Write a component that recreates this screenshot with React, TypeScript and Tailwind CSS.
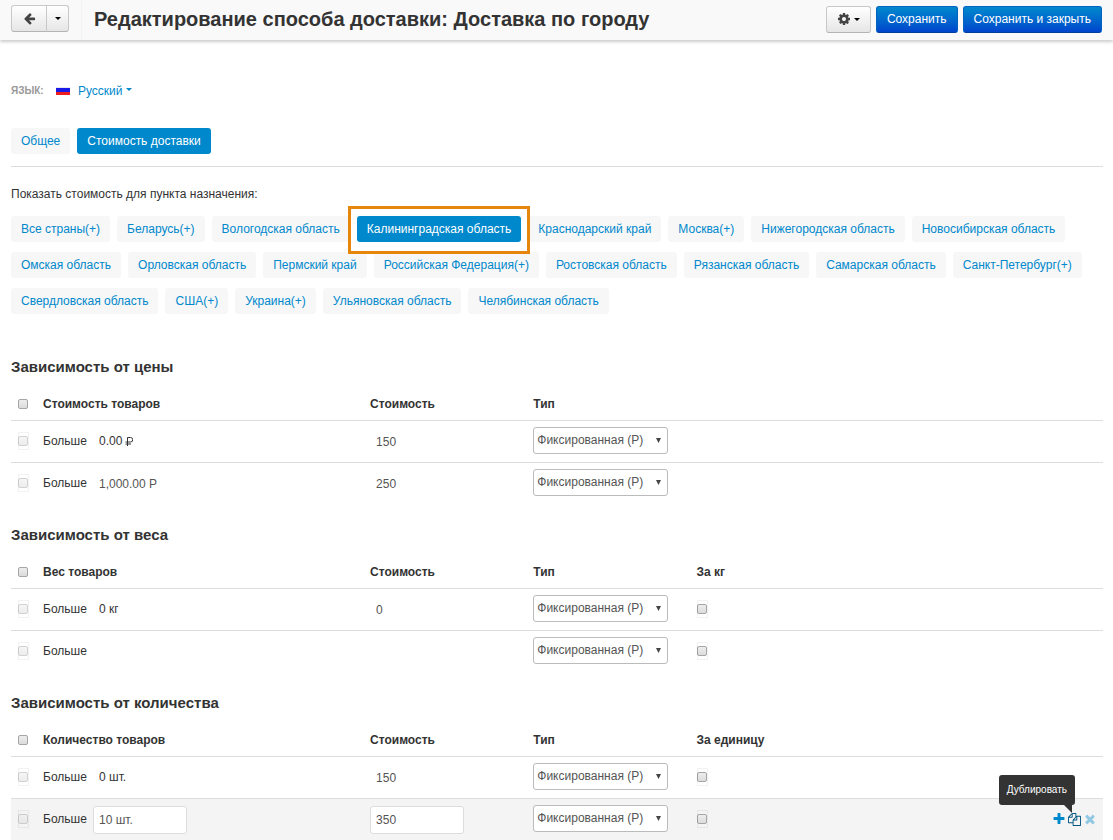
import React from "react";
import clsx from "clsx";

const ARROW_LEFT =
  "M1664 896v128q0 53-32.5 90.5t-84.5 37.5h-704l293 294q38 36 38 90t-38 90l-75 76q-37 37-90 37-52 0-91-37l-651-652q-37-37-37-90 0-52 37-91l651-650q38-38 91-38 52 0 90 38l75 74q38 38 38 91t-38 91l-293 293h704q52 0 84.5 37.5t32.5 90.5z";
const COG =
  "M1152 896q0-106-75-181t-181-75-181 75-75 181 75 181 181 75 181-75 75-181zm512-109v222q0 12-8 23t-20 13l-185 28q-19 54-39 91 35 50 107 138 10 12 10 25t-9 23q-27 37-99 108t-94 71q-12 0-26-9l-138-108q-44 23-91 38-16 136-29 186-7 28-36 28h-222q-14 0-24.5-8.5t-11.5-21.5l-28-184q-49-16-90-37l-141 107q-10 9-25 9-14 0-25-11-126-114-165-168-7-10-7-23 0-12 8-23 15-21 51-66.5t54-70.5q-27-50-41-99l-183-27q-13-2-21-12.5t-8-23.5v-222q0-12 8-23t19-13l186-28q14-46 39-92-40-57-107-138-10-12-10-24 0-10 9-23 26-36 98.5-107.5t94.5-71.5q13 0 26 10l138 107q44-23 91-38 16-136 29-186 7-28 36-28h222q14 0 24.5 8.5t11.5 21.5l28 184q49 16 90 37l142-107q9-9 24-9 13 0 25 10 129 119 165 170 7 8 7 22 0 12-8 23-15 21-51 66.5t-54 70.5q26 50 41 98l183 28q13 2 21 12.5t8 23.5z";
const PLUS =
  "M1600 736v192q0 40-28 68t-68 28h-416v416q0 40-28 68t-68 28h-192q-40 0-68-28t-28-68v-416h-416q-40 0-68-28t-28-68v-192q0-40 28-68t68-28h416v-416q0-40 28-68t68-28h192q40 0 68 28t28 68v416h416q40 0 68 28t28 68z";
const COPY =
  "M1696 384q40 0 68 28t28 68v1216q0 40-28 68t-68 28h-960q-40 0-68-28t-28-68v-288h-544q-40 0-68-28t-28-68v-672q0-40 20-88t48-76l408-408q28-28 76-48t88-20h416q40 0 68 28t28 68v328q68-40 128-40h416zm-544 213l-299 299h299v-299zm-640-384l-299 299h299v-299zm196 647l316-316v-416h-384v416q0 40-28 68t-68 28h-416v640h512v-256q0-40 20-88t48-76zm956 804v-1152h-384v416q0 40-28 68t-68 28h-416v640h896z";
const TIMES =
  "M1490 1322q0 40-28 68l-136 136q-28 28-68 28t-68-28l-294-294-294 294q-28 28-68 28t-68-28l-136-136q-28-28-28-68t28-68l294-294-294-294q-28-28-28-68t28-68l136-136q28-28 68-28t68 28l294 294 294-294q28-28 68-28t68 28l136 136q28 28 28 68t-28 68l-294 294 294 294q28 28 28 68z";

function Icon({ path, className }: { path: string; className: string }) {
  return (
    <svg viewBox="0 0 1792 1792" fill="currentColor" aria-hidden="true" className={className}>
      <path d={path} />
    </svg>
  );
}

function Caret({ className }: { className?: string }) {
  return (
    <svg viewBox="0 0 6 3" fill="currentColor" aria-hidden="true" className={clsx("h-[3px] w-[6px]", className)}>
      <path d="M0 0h6L3 3z" />
    </svg>
  );
}

function Checkbox({ label, faded }: { label: string; faded?: boolean }) {
  return (
    <input
      type="checkbox"
      aria-label={label}
      className={clsx(
        "block h-[10px] w-[10px] appearance-none rounded-[2px] border border-[#a6a6a6] bg-linear-to-b from-[#ededed] to-[#dcdcdc]",
        faded && "opacity-50",
      )}
    />
  );
}

function FramedCheckbox({ label, faded }: { label: string; faded?: boolean }) {
  return (
    <span className="flex h-[18px] w-[11px] items-center outline outline-offset-[-1px] outline-black/5">
      <Checkbox label={label} faded={faded} />
    </span>
  );
}

const greyButton =
  "flex h-[27px] items-center justify-center border border-[#c8c8c8] border-b-[#b3b3b3] bg-linear-to-b from-white to-[#e6e6e6] text-[#444]";
const blueButton =
  "h-[27px] rounded-[3px] border border-[#0063c0] border-b-[#003f9e] bg-linear-to-b from-[#0088cc] to-[#0044cc] px-[10px] text-white";

function Pill({ children, active }: { children: React.ReactNode; active?: boolean }) {
  return (
    <a
      href="#"
      className={clsx(
        "relative flex h-[26px] items-center rounded-[3px] px-[10px] whitespace-nowrap",
        active ? "bg-[#0088cc] text-white" : "bg-[#f7f7f7] text-[#0088cc]",
      )}
    >
      {children}
    </a>
  );
}

const destinations = [
  "Все страны(+)",
  "Беларусь(+)",
  "Вологодская область",
  "Калининградская область",
  "Краснодарский край",
  "Москва(+)",
  "Нижегородская область",
  "Новосибирская область",
  "Омская область",
  "Орловская область",
  "Пермский край",
  "Российская Федерация(+)",
  "Ростовская область",
  "Рязанская область",
  "Самарская область",
  "Санкт-Петербург(+)",
  "Свердловская область",
  "США(+)",
  "Украина(+)",
  "Ульяновская область",
  "Челябинская область",
];

type Row = { from: string; editableFrom?: boolean; rouble?: boolean; cost?: string; active?: boolean };
type Section = { title: string; subject: string; per?: string; rows: Row[] };

const sections: Section[] = [
  {
    title: "Зависимость от цены",
    subject: "Стоимость товаров",
    rows: [
      { from: "0.00", rouble: true, cost: "150" },
      { from: "1,000.00 Р", editableFrom: true, cost: "250" },
    ],
  },
  {
    title: "Зависимость от веса",
    subject: "Вес товаров",
    per: "За кг",
    rows: [{ from: "0 кг", cost: "0" }, { from: "" }],
  },
  {
    title: "Зависимость от количества",
    subject: "Количество товаров",
    per: "За единицу",
    rows: [
      { from: "0 шт.", cost: "150" },
      { from: "10 шт.", editableFrom: true, cost: "350", active: true },
    ],
  },
];

function Rouble() {
  return (
    <svg viewBox="0 0 8 9" fill="none" stroke="currentColor" role="img" aria-label="₽" className="h-[9px] w-[8px]">
      <path d="M2.5 9V.5H5.500a2 2 0 0 1 0 4.500H.5M.5 7H6" />
    </svg>
  );
}

function TextField({ value, label, active }: { value: string; label: string; active?: boolean }) {
  return (
    <input
      type="text"
      aria-label={label}
      defaultValue={value}
      className={clsx(
        "mt-[2px] block h-[28px] w-[94px] rounded-[3px] border px-[5px] text-[#555]",
        active ? "border-[#ddd] bg-white" : "border-transparent bg-transparent",
      )}
    />
  );
}

function RateTable({ section }: { section: Section }) {
  return (
    <section>
      <h2 className="text-[15px] leading-[20px] font-bold">{section.title}</h2>
      <table className="mt-[10px] w-full table-fixed border-collapse text-left">
        <colgroup>
          <col className="w-8" />
          <col className="w-[29.95%]" />
          <col className="w-[14.95%]" />
          <col className="w-[14.95%]" />
          <col />
        </colgroup>
        <thead>
          <tr className="h-[33px]">
            <th className="pt-[2px] pl-[7px]">
              <Checkbox label={"Выбрать все: " + section.title} />
            </th>
            <th className="pt-[2px]">{section.subject}</th>
            <th className="pt-[2px]">Стоимость</th>
            <th className="pt-[2px]">Тип</th>
            <th className="pt-[2px]">{section.per}</th>
          </tr>
        </thead>
        <tbody>
          {section.rows.map((row, i) => (
            <tr key={i} className={clsx("h-[42px] border-t border-[#ddd]", row.active && "bg-[#f4f4f4]")}>
              <td className="pl-[7px]">
                <FramedCheckbox label="Выбрать строку" faded />
              </td>
              <td>
                <div className="flex items-center">
                  <span className="w-[50px]">Больше</span>
                  {row.editableFrom ? (
                    <TextField value={row.from} label={section.subject} active={row.active} />
                  ) : (
                    <span className="flex items-center gap-[3px] pl-[6px]">
                      {row.from}
                      {row.rouble && <Rouble />}
                    </span>
                  )}
                </div>
              </td>
              <td>
                <TextField value={row.cost ?? ""} label="Стоимость" active={row.active} />
              </td>
              <td className="pb-[2px]">
                <div className="relative flex w-[135px] items-center">
                  <select
                    aria-label="Тип"
                    className="h-[27px] w-full appearance-none rounded-[3px] border border-[#bbb] bg-white pl-[3px] text-[#555]"
                  >
                    <option>Фиксированная (Р)</option>
                  </select>
                  <svg viewBox="0 0 5 5" aria-hidden="true" className="pointer-events-none absolute right-[7px] h-[5px] w-[5px] fill-[#444]">
                    <path d="M0 0h5L2.500 5z" />
                  </svg>
                </div>
              </td>
              <td>
                <div className="flex items-center justify-between">
                  {section.per ? <FramedCheckbox label={section.per} /> : <span />}
                  {row.active && (
                    <div className="flex items-center gap-[2px] pr-[6px] text-[#0088cc]">
                      <button type="button" aria-label="Добавить">
                        <Icon path={PLUS} className="h-[14px] w-[14px]" />
                      </button>
                      <div className="relative">
                        <button type="button" aria-label="Дублировать" className="block text-[#005580]">
                          <Icon path={COPY} className="h-[13px] w-[13px]" />
                        </button>
                        <div
                          role="tooltip"
                          className="absolute right-[6px] bottom-[21px] flex h-[30px] items-center rounded-[3px] bg-[#333] px-2 text-[10px] text-white"
                        >
                          Дублировать
                          <svg viewBox="0 0 8 8" aria-hidden="true" className="absolute top-full right-[3px] h-[8px] w-[8px] fill-[#333]">
                            <path d="M0 0h8v8z" />
                          </svg>
                        </div>
                      </div>
                      <button type="button" aria-label="Удалить" className="opacity-40">
                        <Icon path={TIMES} className="h-[14px] w-[14px]" />
                      </button>
                    </div>
                  )}
                </div>
              </td>
            </tr>
          ))}
        </tbody>
      </table>
    </section>
  );
}

export default function App() {
  return (
    <div className="bg-white font-['Liberation_Sans',Arial,sans-serif] text-[12px] leading-[18px] text-[#333]">
      <header className="flex h-10 items-center bg-[#f9f9f9] pr-[11px] pl-[11px] shadow-[0_2px_3px_rgba(0,0,0,0.2)]">
        <div className="-mt-1 flex">
          <button type="button" aria-label="Назад" className={clsx(greyButton, "w-[36px] rounded-l-[3px]")}>
            <Icon path={ARROW_LEFT} className="h-[13px] w-[13px]" />
          </button>
          <button type="button" aria-label="Ещё" className={clsx(greyButton, "-ml-px w-[23px] rounded-r-[3px]")}>
            <Caret className="text-black" />
          </button>
        </div>
        <div className="ml-[12px] h-full w-px bg-[#f3f3f3]" />
        <h1 className="-mt-[2px] ml-[12px] flex-1 text-[20px] leading-[26px] font-bold whitespace-nowrap">
          Редактирование способа доставки: Доставка по городу
        </h1>
        <div className="-mt-[2px] flex items-center gap-[5px]">
          <button type="button" aria-label="Настройки" className={clsx(greyButton, "w-[45px] gap-[3px] rounded-[3px]")}>
            <Icon path={COG} className="h-[14px] w-[14px]" />
            <Caret className="text-black" />
          </button>
          <button type="button" className={blueButton}>
            Сохранить
          </button>
          <button type="button" className={blueButton}>
            Сохранить и закрыть
          </button>
        </div>
      </header>

      <main className="pt-[42px] pr-[10px] pl-[11px]">
        <div className="flex items-center">
          <span className="w-[45px] text-[10px] font-bold text-[#999] uppercase">Язык:</span>
          <a href="#" className="flex items-center text-[#0088cc]">
            <svg viewBox="0 0 14 8" aria-hidden="true" className="h-[8px] w-[14px]">
              <path fill="#e8e8f4" d="M0 0h14v1H0z" />
              <path fill="#1a1ae6" d="M0 1h14v4H0z" />
              <path fill="#ee1c1c" d="M0 5h14v3H0z" />
            </svg>
            <span className="ml-[8px]">Русский</span>
            <Caret className="-mt-[3px] ml-[3px]" />
          </a>
        </div>

        <nav className="mt-[28px] flex gap-[7px] border-b border-[#ddd] pb-[12px]">
          <Pill>Общее</Pill>
          <Pill active>Стоимость доставки</Pill>
        </nav>

        <p className="mt-[18px]">Показать стоимость для пункта назначения:</p>

        <ul className="mt-[13px] flex flex-wrap gap-x-[7px] gap-y-[10px]">
          {destinations.map((name) => {
            const active = name === "Калининградская область";
            return (
              <li key={name} className={clsx(active && "relative z-10")}>
                {active && (
                  <div className="absolute -inset-x-[9px] -top-[10px] -bottom-[12px] border-3 border-[#e6860a] bg-white" />
                )}
                <Pill active={active}>{name}</Pill>
              </li>
            );
          })}
        </ul>

        <div className="mt-[43px] grid gap-[21px]">
          {sections.map((section) => (
            <RateTable key={section.title} section={section} />
          ))}
        </div>
      </main>
    </div>
  );
}
